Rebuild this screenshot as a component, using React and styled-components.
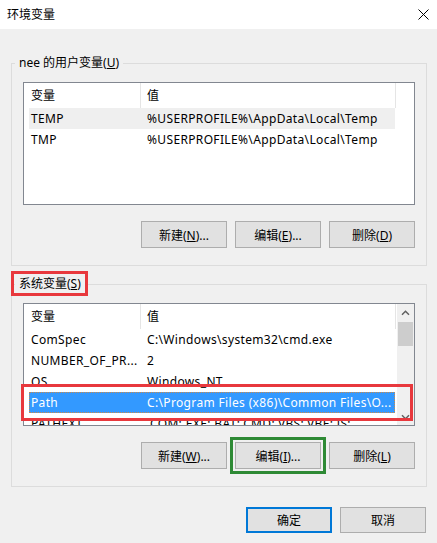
import React from 'react'
import styled, { createGlobalStyle, css } from 'styled-components'

const GlobalStyle = createGlobalStyle`
  html, body {
    margin: 0;
    padding: 0;
    background: #f0f0f0;
  }
  body {
    font-family: "Noto Sans", "Noto Sans CJK SC", sans-serif;
    font-size: 12px;
    color: #000;
  }
`

const Window = styled.div`
  width: 437px;
  height: 543px;
  display: flex;
  flex-direction: column;
  background: #f0f0f0;
  overflow: hidden;
`

const TitleBar = styled.div`
  height: 29px;
  flex: none;
  box-sizing: border-box;
  padding: 0 8px 0 7px;
  display: flex;
  align-items: center;
  justify-content: space-between;
  background: #fff;
`

const Title = styled.span`
  line-height: 16px;
`

const Body = styled.div`
  flex: 1;
  padding: 26px 10px 0 11px;
  display: flex;
  flex-direction: column;
`

const GroupBox = styled.fieldset`
  margin: ${p => p.$top || 0}px 0 0;
  border: 1px solid #dcdcdc;
  padding: 11px 11px 17px;
  min-width: 0;
`

const Legend = styled.legend`
  padding: 0 4px;
  margin-left: -8px;
  line-height: 16px;
  position: relative;

  ${p => p.$marked && css`
    &::after {
      content: '';
      position: absolute;
      inset: -5px -3px -4px -4px;
      border: 3px solid #e8383d;
      pointer-events: none;
    }
  `}
`

const GroupContent = styled.div`
  display: flex;
  flex-direction: column;
  gap: 16px;
`

const ListFrame = styled.div`
  position: relative;
  height: 123px;
`

const ListView = styled.div`
  height: 100%;
  box-sizing: border-box;
  border: 1px solid #828790;
  background: #fff;
  display: flex;
  overflow: hidden;
`

const ListContent = styled.div`
  flex: 1;
  min-width: 0;
`

const Header = styled.div`
  display: flex;
  height: 25px;
`

const HeaderCell = styled.div`
  width: ${p => p.$w}px;
  box-sizing: border-box;
  padding-left: ${p => p.$pad}px;
  border-right: 1px solid #e5e5e5;
  line-height: 25px;
`

const Row = styled.div`
  display: flex;
  align-items: center;
  height: 21px;
  width: 366px;
  margin-left: 5px;
  box-sizing: border-box;
  border: 1px solid transparent;
  white-space: nowrap;

  ${p => p.$hover && css`
    background: #efefef;
  `}

  ${p => p.$selected && css`
    background: #3399ff;
    color: #fff;
    border: 1px dotted #c98a4c;
  `}
`

const Cell = styled.div`
  width: ${p => (p.$w ? `${p.$w}px` : 'auto')};
  flex: ${p => (p.$w ? 'none' : 1)};
  box-sizing: border-box;
  padding-left: ${p => p.$pad}px;
  letter-spacing: 0.35px;
  overflow: hidden;
`

const ScrollBar = styled.div`
  width: 17px;
  flex: none;
  background: #f0f0f0;
  display: flex;
  flex-direction: column;
`

const ScrollArrow = styled.div`
  height: 17px;
  display: flex;
  align-items: center;
  justify-content: center;
`

const Thumb = styled.div`
  height: 24px;
  margin: 1px 1px 0;
  background: #cdcdcd;
`

const Track = styled.div`
  flex: 1;
`

const RowMark = styled.div`
  position: absolute;
  left: -2px;
  top: 81px;
  width: 392px;
  height: 37px;
  box-sizing: border-box;
  border: 3px solid #e8383d;
  pointer-events: none;
`

const ButtonRow = styled.div`
  display: flex;
  justify-content: flex-end;
  gap: 8px;
  padding-right: ${p => p.$pr || 0}px;
`

const Button = styled.button`
  width: 86px;
  height: ${p => p.$h || 27}px;
  box-sizing: border-box;
  padding: 0;
  font: inherit;
  color: #000;
  background: #e1e1e1;
  border: 1px solid #adadad;

  ${p => p.$default && css`
    border: 2px solid #0078d7;
  `}

  ${p => p.$marked && css`
    outline: 3px solid #2e8a35;
    outline-offset: 2px;
  `}
`

const Footer = styled(ButtonRow)`
  margin-top: 20px;
`

const Chevron = ({ down }) => (
  <svg width='9' height='6' viewBox='0 0 9 6'>
    <path
      d={down ? 'M1 1.2 L4.5 4.7 L8 1.2' : 'M1 4.8 L4.5 1.3 L8 4.8'}
      fill='none'
      stroke='#606060'
      strokeWidth='1.5'
    />
  </svg>
)

const CloseIcon = () => (
  <svg width='11' height='11' viewBox='0 0 11 11'>
    <path d='M0.5 0.5 L10.5 10.5 M10.5 0.5 L0.5 10.5' stroke='#000' strokeWidth='1' />
  </svg>
)

const userVars = [
  { name: 'TEMP', value: '%USERPROFILE%\\AppData\\Local\\Temp', hover: true },
  { name: 'TMP', value: '%USERPROFILE%\\AppData\\Local\\Temp' }
]

const systemVars = [
  { name: 'ComSpec', value: 'C:\\Windows\\system32\\cmd.exe' },
  { name: 'NUMBER_OF_PR...', value: '2' },
  { name: 'OS', value: 'Windows_NT' },
  { name: 'Path', value: 'C:\\Program Files (x86)\\Common Files\\O...', selected: true },
  { name: 'PATHEXT', value: '.COM;.EXE;.BAT;.CMD;.VBS;.VBE;.JS;...' }
]

const VarList = ({ rows, scroll, marked }) => (
  <ListFrame>
    <ListView>
      <ListContent>
        <Header>
          <HeaderCell $w={117} $pad={7}>变量</HeaderCell>
          <HeaderCell $w={255} $pad={6}>值</HeaderCell>
        </Header>
        {rows.map(r => (
          <Row key={r.name} $hover={r.hover} $selected={r.selected}>
            <Cell $w={110} $pad={1}>{r.name}</Cell>
            <Cell $pad={7}>{r.value}</Cell>
          </Row>
        ))}
      </ListContent>
      {scroll && (
        <ScrollBar>
          <ScrollArrow><Chevron /></ScrollArrow>
          <Thumb />
          <Track />
          <ScrollArrow><Chevron down /></ScrollArrow>
        </ScrollBar>
      )}
    </ListView>
    {marked && <RowMark />}
  </ListFrame>
)

const Key = ({ label, k, dots }) => (
  <>
    {label}(<u>{k}</u>){dots && '...'}
  </>
)

const App = () => (
  <Window>
    <GlobalStyle />
    <TitleBar>
      <Title>环境变量</Title>
      <CloseIcon />
    </TitleBar>

    <Body>
      <GroupBox>
        <Legend>nee 的用户变量(<u>U</u>)</Legend>
        <GroupContent>
          <VarList rows={userVars} />
          <ButtonRow>
            <Button><Key label='新建' k='N' dots /></Button>
            <Button><Key label='编辑' k='E' dots /></Button>
            <Button><Key label='删除' k='D' /></Button>
          </ButtonRow>
        </GroupContent>
      </GroupBox>

      <GroupBox $top={10}>
        <Legend $marked>系统变量(<u>S</u>)</Legend>
        <GroupContent>
          <VarList rows={systemVars} scroll marked />
          <ButtonRow>
            <Button><Key label='新建' k='W' dots /></Button>
            <Button $marked><Key label='编辑' k='I' dots /></Button>
            <Button><Key label='删除' k='L' /></Button>
          </ButtonRow>
        </GroupContent>
      </GroupBox>

      <Footer $pr={1}>
        <Button $h={26} $default>确定</Button>
        <Button $h={26}>取消</Button>
      </Footer>
    </Body>
  </Window>
)

export default App
